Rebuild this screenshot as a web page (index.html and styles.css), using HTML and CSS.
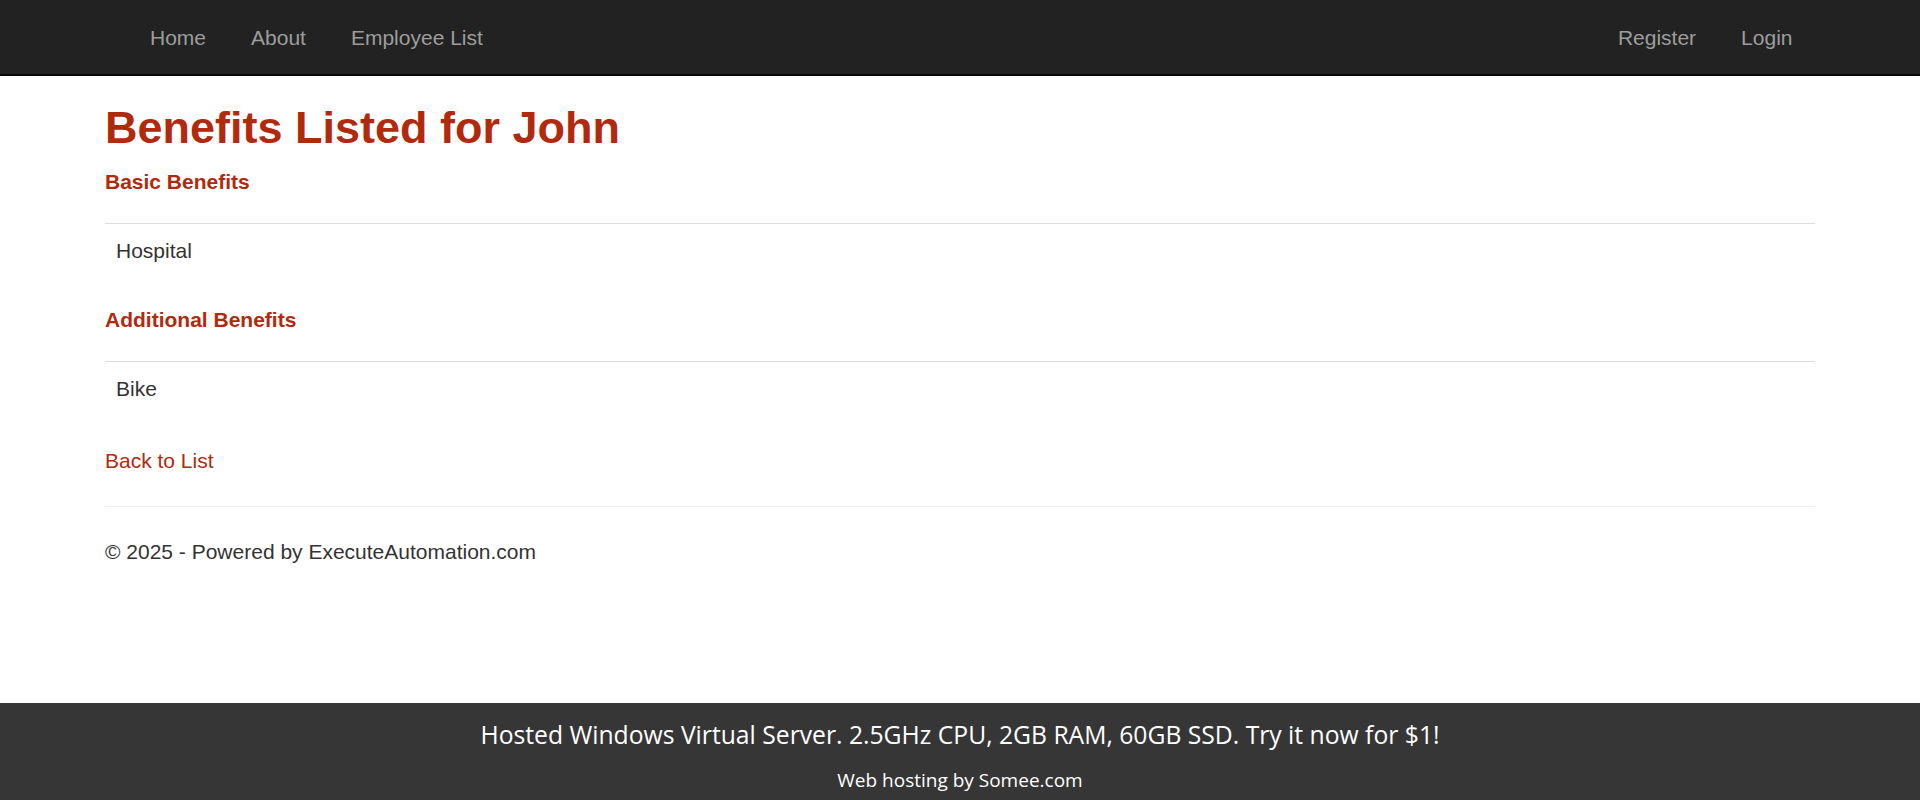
FILE: index.html
```html
<!DOCTYPE html>
<html lang="en">
<head>
<meta charset="utf-8">
<title>Benefits Listed for John</title>
<link rel="stylesheet" href="styles.css">
</head>
<body>
<header class="navbar">
  <div class="navbar-inner">
    <ul class="nav nav-left">
      <li><a href="#">Home</a></li>
      <li><a href="#">About</a></li>
      <li><a href="#">Employee List</a></li>
    </ul>
    <ul class="nav nav-right">
      <li><a href="#">Register</a></li>
      <li><a href="#">Login</a></li>
    </ul>
  </div>
</header>

<main class="container">
  <h1 class="page-title">Benefits Listed for John</h1>

  <h4 class="section-title">Basic Benefits</h4>
  <table class="table table-first">
    <tbody>
      <tr><td>Hospital</td></tr>
    </tbody>
  </table>

  <h4 class="section-title">Additional Benefits</h4>
  <table class="table table-last">
    <tbody>
      <tr><td>Bike</td></tr>
    </tbody>
  </table>

  <p class="back"><a href="#">Back to List</a></p>

  <hr class="divider">
  <footer class="site-footer">
    <p>&copy; 2025 - Powered by ExecuteAutomation.com</p>
  </footer>
</main>

<div class="ad-bar">
  <a class="ad-title" href="#">Hosted Windows Virtual Server. 2.5GHz CPU, 2GB RAM, 60GB SSD. Try it now for $1!</a>
  <a class="ad-sub" href="#">Web hosting by Somee.com</a>
</div>
</body>
</html>
```

FILE: styles.css
```css
html, body {
  margin: 0;
  padding: 0;
}

body {
  min-height: 100vh;
  display: flex;
  flex-direction: column;
  background: #ffffff;
  color: #333333;
  font-family: "Liberation Sans", Arial, Helvetica, sans-serif;
  font-size: 21px;
  line-height: 30px;
}

a {
  text-decoration: none;
}

/* ---------- navbar ---------- */
.navbar {
  background: #222222;
  height: 74px;
  border-bottom: 2px solid #080808;
  flex: none;
}

.navbar-inner {
  width: 1710px;
  margin: 0 auto;
  display: flex;
  justify-content: space-between;
}

.nav {
  list-style: none;
  margin: 0;
  padding: 0;
  display: flex;
}

.nav-left {
  padding-left: 22.5px;
}

.nav a {
  display: block;
  padding: 22.5px 22.5px 21.5px;
  color: #9d9d9d;
  line-height: 30px;
}

/* ---------- content ---------- */
.container {
  width: 1710px;
  margin: 0 auto;
  flex: none;
}

.page-title {
  margin: 27px 0 14px;
  font-size: 45px;
  line-height: 49.5px;
  font-weight: bold;
  color: #b22a0e;
}

.section-title {
  margin: 0 0 26px;
  font-size: 21px;
  line-height: 30px;
  font-weight: bold;
  color: #b22a0e;
}

.table {
  width: 100%;
  border-collapse: collapse;
  border-spacing: 0;
}

.table td {
  padding: 12px 11px;
  border-top: 1px solid #dddddd;
  line-height: 30px;
}

.table-first {
  margin-bottom: 27px;
}

.table-last {
  margin-bottom: 30px;
}

.back {
  margin: 0;
}

.back a {
  color: #b22a0e;
}

.divider {
  margin: 30px 0 30px;
  border: 0;
  border-top: 1px solid #eeeeee;
  height: 0;
}

.site-footer p {
  margin: 0 0 15px;
}

/* ---------- hosting bar ---------- */
.ad-bar {
  margin-top: auto;
  flex: none;
  background: #363636;
  height: 97px;
  box-sizing: border-box;
  padding-top: 16px;
  display: flex;
  flex-direction: column;
  align-items: center;
  font-family: "Open Sans", "Noto Sans", sans-serif;
  color: #ffffff;
}

.ad-title {
  color: #ffffff;
  font-size: 24.7px;
  line-height: 32px;
  white-space: nowrap;
}

.ad-sub {
  margin-top: 16px;
  color: #ffffff;
  font-size: 19px;
  line-height: 26px;
  white-space: nowrap;
}
```
